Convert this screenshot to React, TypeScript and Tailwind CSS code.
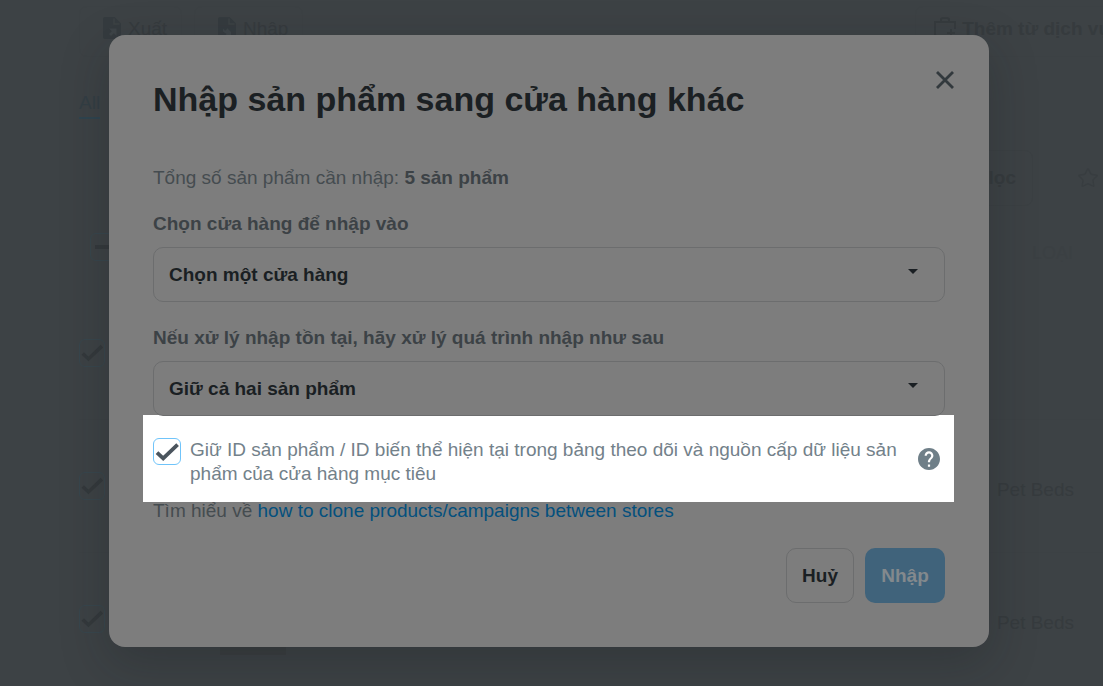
import React from "react";
import { Star } from "lucide-react";

function CheckMark({ className }: { className: string }) {
  return (
    <svg viewBox="0 0 28 28" aria-hidden="true" className={className}>
      <path d="M4 14.6 10.2 20.4 24.6 6.6" fill="none" stroke="currentColor" strokeWidth="3.8" />
    </svg>
  );
}

function FileIcon({ incoming }: { incoming?: boolean }) {
  return (
    <svg viewBox="0 0 18 22" aria-hidden="true" className="h-[22px] w-[18px] text-[#353b3f]">
      <path d="M2 0h9.5L18 6.5V20a2 2 0 0 1-2 2H2a2 2 0 0 1-2-2V2a2 2 0 0 1 2-2Z" fill="currentColor" />
      <path d="M11 1.5V7h5.5" fill="none" stroke="#3d4346" strokeWidth="1.5" />
      <path
        d={incoming ? "M5 11.5l2.2 2.2L9 12v-1l4 4v4H6.5l2-2L5 14.5Z" : "M6 11.5h7.5V19l-2.7-2.7L8 19l-2-2 2.8-2.8Z"}
        fill="#3e4448"
      />
    </svg>
  );
}

function ProductCheckbox({ label }: { label: string }) {
  return (
    <label className="relative block h-7 w-[26px]">
      <input
        type="checkbox"
        defaultChecked
        aria-label={label}
        className="block h-7 w-[26px] appearance-none rounded-md border border-[#38464d]"
      />
      <CheckMark className="absolute inset-0 h-7 w-[26px] text-[#34393c]" />
    </label>
  );
}

function ProductPage() {
  return (
    <div className="flex h-screen flex-col overflow-hidden pl-[79px] text-[19px] leading-6 text-[#363b3e]">
      <div className="mt-[6px] flex h-[51px] shrink-0 items-stretch">
        <button className="flex w-[103px] items-start gap-[7px] rounded-lg border border-[#3c4144] pt-[10px] pl-[23px]">
          <FileIcon />
          Xuất
        </button>
        <button className="ml-3 flex w-[109px] items-start gap-[7px] rounded-lg border border-[#3c4144] pt-[10px] pl-[23px]">
          <FileIcon incoming />
          Nhập
        </button>
        <button className="-mr-6 ml-auto flex items-start gap-[6px] rounded-lg border border-[#3c4144] pt-[10px] pr-4 pl-[18px] font-bold whitespace-nowrap">
          <svg viewBox="0 0 22 22" aria-hidden="true" className="size-[22px]" fill="none" stroke="currentColor" strokeWidth="2">
            <path d="M11 19H3a2 2 0 0 1-2-2V5h20v7M7 5V3a2 2 0 0 1 2-2h4a2 2 0 0 1 2 2v2M17 12v8M13 16h8" />
          </svg>
          Thêm từ dịch vụ
        </button>
      </div>
      <nav className="mt-[34px] flex">
        <a href="#all" className="border-b-2 border-[#2f444f] pb-[2px] text-[#333e44]">All</a>
      </nav>
      <div className="mt-[31px] flex h-14 shrink-0 items-center justify-end">
        <button className="flex h-14 items-center rounded-lg border border-[#3b4043] px-4 font-bold">Bộ lọc</button>
        <button aria-label="Yêu thích" className="mr-1 ml-11">
          <Star className="size-[22px] text-[#383d40]" strokeWidth={1.5} />
        </button>
      </div>
      <div className="mt-[27px] flex h-7 shrink-0 items-center justify-between pr-[30px] pl-[11px]">
        <div className="flex h-7 w-7 items-center justify-end rounded-md border border-[#38464d] pr-[2px]">
          <span className="h-1 w-5 bg-[#34393c]" />
        </div>
        <span className="pt-3 text-lg text-[#3b4043]">LOẠI</span>
      </div>
      <div className="mt-[26px] flex flex-col">
        {["", "Pet Beds", "Pet Beds"].map((type, i) => (
          <div key={i} className="flex h-[133px] items-center justify-between border-b border-[#3c4144] pr-[29px]">
            <ProductCheckbox label={`Sản phẩm ${i + 1}`} />
            {i === 2 && <span className="mr-auto mb-[30px] ml-[115px] h-[66px] w-[66px] self-end bg-[#3a3e40]" />}
            <span className="pt-2">{type}</span>
          </div>
        ))}
      </div>
    </div>
  );
}

function SelectField({ id, label, value }: { id: string; label: string; value: string }) {
  return (
    <div className="flex flex-col gap-[11px]">
      <label htmlFor={id} className="font-bold text-[#3c4246]">{label}</label>
      <div className="relative">
        <select
          id={id}
          className="block h-[55px] w-full appearance-none rounded-[10px] border border-[#6c6d6e] bg-transparent px-[15px] font-bold text-[#1a1f23]"
        >
          <option>{value}</option>
        </select>
        <svg viewBox="0 0 10 5" aria-hidden="true" className="pointer-events-none absolute top-[22px] right-[27px] h-[5px] w-[10px]">
          <path d="M0 0h10L5 5Z" fill="#1a1f23" />
        </svg>
      </div>
    </div>
  );
}

export default function App() {
  return (
    <div className="relative min-h-screen overflow-hidden bg-[#3d4245] font-['Liberation_Sans',sans-serif]">
      <ProductPage />
      <div className="absolute inset-0 flex items-start justify-center pt-[35px] pr-[5px]">
        <section
          role="dialog"
          aria-labelledby="dialog-title"
          className="flex w-full max-w-[880px] flex-col rounded-2xl bg-[#7d7d7d] p-11 text-[19px] leading-6 text-[#454c50] shadow-[0_16px_48px_rgba(20,25,28,0.25)]"
        >
          <header className="flex items-start justify-between">
            <h1 id="dialog-title" className="text-[34px] leading-10 font-bold text-[#1b2023]">
              Nhập sản phẩm sang cửa hàng khác
            </h1>
            <button aria-label="Đóng" className="-mt-2 -mr-[9px] text-[#32393d]">
              <svg viewBox="0 0 18 18" aria-hidden="true" className="size-[18px]">
                <path d="M1 1 17 17M17 1 1 17" fill="none" stroke="currentColor" strokeWidth="2.8" />
              </svg>
            </button>
          </header>

          <p className="mt-[47px] mb-[22px]">
            Tổng số sản phẩm cần nhập: <strong className="text-[#3c4246]">5 sản phẩm</strong>
          </p>
          <div className="flex flex-col gap-6">
            <SelectField id="store" label="Chọn cửa hàng để nhập vào" value="Chọn một cửa hàng" />
            <SelectField
              id="conflict"
              label="Nếu xử lý nhập tồn tại, hãy xử lý quá trình nhập như sau"
              value="Giữ cả hai sản phẩm"
            />
          </div>

          <div className="-mt-px -mr-[9px] -ml-[10px] flex items-start bg-white pt-[23px] pr-[14px] pb-4 pl-[10px] text-[#73818a]">
            <label className="flex flex-1 items-start gap-[9px]">
              <span className="relative block h-[27px] w-7 shrink-0">
                <input
                  type="checkbox"
                  defaultChecked
                  className="block h-[27px] w-7 appearance-none rounded-md border border-[#70c4fa] bg-white"
                />
                <CheckMark className="pointer-events-none absolute inset-0 size-7 text-[#4b555e]" />
              </span>
              <span>
                Giữ ID sản phẩm / ID biến thể hiện tại trong bảng theo dõi và nguồn cấp dữ liệu sản phẩm của cửa hàng mục tiêu
              </span>
            </label>
            <button aria-label="Trợ giúp" className="mt-[10px] ml-3">
              <svg viewBox="2 2 20 20" aria-hidden="true" className="size-[22px]">
                <path
                  fill="#6f7f88"
                  d="M12 2C6.48 2 2 6.48 2 12s4.48 10 10 10 10-4.48 10-10S17.52 2 12 2zm1 17h-2v-2h2v2zm2.07-7.75-.9.92C13.45 12.9 13 13.5 13 15h-2v-.5c0-1.1.45-2.1 1.17-2.83l1.24-1.26c.37-.36.59-.86.59-1.41 0-1.1-.9-2-2-2s-2 .9-2 2H8c0-2.21 1.79-4 4-4s4 1.79 4 4c0 .88-.36 1.68-.93 2.25z"
                />
              </svg>
            </button>
          </div>

          <p className="-mt-[3px]">
            Tìm hiểu về{" "}
            <a href="#clone" className="text-[#04507d]">how to clone products/campaigns between stores</a>
          </p>

          <footer className="mt-[25px] flex justify-end gap-[11px]">
            <button className="h-[55px] rounded-[10px] border border-[#6c6d6e] px-[15px] font-bold text-[#1a1f23]">Huỷ</button>
            <button className="h-[55px] min-w-20 rounded-[10px] bg-[#40637b] px-4 font-bold text-[#83898d]">Nhập</button>
          </footer>
        </section>
      </div>
    </div>
  );
}
